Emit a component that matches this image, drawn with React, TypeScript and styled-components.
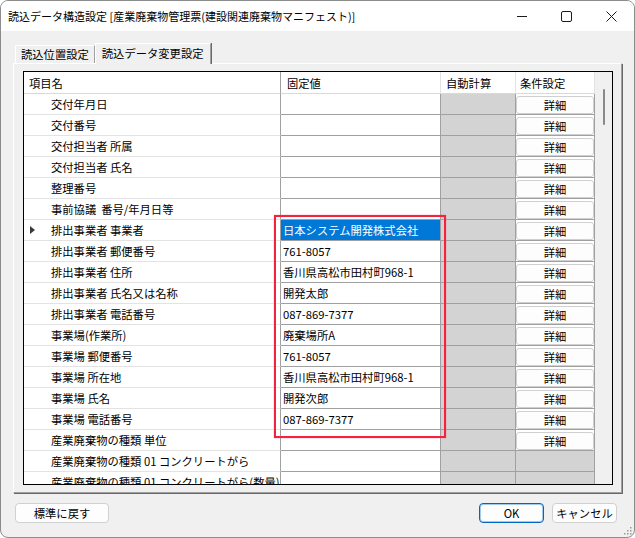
import React from "react";
import styled, { createGlobalStyle, css } from "styled-components";

const FONT = `"Noto Sans CJK JP", "Noto Sans", sans-serif`;

const GlobalStyle = createGlobalStyle`
  html, body {
    margin: 0;
    padding: 0;
    background: #ffffff;
  }
  body {
    width: 635px;
    height: 538px;
    overflow: hidden;
    font-family: ${FONT};
  }
  * {
    box-sizing: border-box;
  }
`;

type RowData = {
  name: string;
  value?: string;
  current?: boolean;
  button: boolean;
};

const rows: RowData[] = [
  { name: "交付年月日", button: true },
  { name: "交付番号", button: true },
  { name: "交付担当者 所属", button: true },
  { name: "交付担当者 氏名", button: true },
  { name: "整理番号", button: true },
  { name: "事前協議  番号/年月日等", button: true },
  { name: "排出事業者 事業者", value: "日本システム開発株式会社", current: true, button: true },
  { name: "排出事業者 郵便番号", value: "761-8057", button: true },
  { name: "排出事業者 住所", value: "香川県高松市田村町968-1", button: true },
  { name: "排出事業者 氏名又は名称", value: "開発太郎", button: true },
  { name: "排出事業者 電話番号", value: "087-869-7377", button: true },
  { name: "事業場(作業所)", value: "廃棄場所A", button: true },
  { name: "事業場 郵便番号", value: "761-8057", button: true },
  { name: "事業場 所在地", value: "香川県高松市田村町968-1", button: true },
  { name: "事業場 氏名", value: "開発次郎", button: true },
  { name: "事業場 電話番号", value: "087-869-7377", button: true },
  { name: "産業廃棄物の種類 単位", button: true },
  { name: "産業廃棄物の種類 01 コンクリートがら", button: false },
  { name: "産業廃棄物の種類 01 コンクリートがら(数量)", button: false },
];

export default function App() {
  return (
    <>
      <GlobalStyle />
      <Window>
        <TitleBar>
          <Title>読込データ構造設定 [産業廃棄物管理票(建設関連廃棄物マニフェスト)]</Title>
          <CaptionButton>
            <svg width="10" height="10" viewBox="0 0 10 10">
              <line x1="0" y1="5.5" x2="10" y2="5.5" stroke="#1a1a1a" strokeWidth="1" />
            </svg>
          </CaptionButton>
          <CaptionButton>
            <svg width="11" height="11" viewBox="0 0 11 11">
              <rect x="0.5" y="0.5" width="10" height="10" rx="1.5" fill="none" stroke="#1a1a1a" strokeWidth="1" />
            </svg>
          </CaptionButton>
          <CaptionButton>
            <svg width="11" height="11" viewBox="0 0 11 11">
              <path d="M0.5 0.5 L10.5 10.5 M10.5 0.5 L0.5 10.5" stroke="#1a1a1a" strokeWidth="1" />
            </svg>
          </CaptionButton>
        </TitleBar>

        <Body>
          <TabStrip>
            <Tab>読込位置設定</Tab>
            <Tab active>読込データ変更設定</Tab>
          </TabStrip>

          <TabPanel>
            <Grid>
              <TableArea>
                <HeaderRow>
                  <HeaderCell first>項目名</HeaderCell>
                  <HeaderCell pad={6}>固定値</HeaderCell>
                  <HeaderCell>自動計算</HeaderCell>
                  <HeaderCell pad={4} last>条件設定</HeaderCell>
                </HeaderRow>
                {rows.map((r, i) => (
                  <Row key={i}>
                    <RowHeader>
                      <Indicator>{r.current && <Arrow />}</Indicator>
                      <RowName>{r.name}</RowName>
                    </RowHeader>
                    <ValueCell current={r.current}>{r.value}</ValueCell>
                    <AutoCell />
                    <CondCell filled={!r.button}>
                      {r.button && <DetailButton>詳細</DetailButton>}
                    </CondCell>
                  </Row>
                ))}
              </TableArea>
              <ScrollTrack>
                <ScrollThumb />
              </ScrollTrack>
              <Highlight />
            </Grid>
          </TabPanel>

          <Footer>
            <DialogButton width={94}>標準に戻す</DialogButton>
            <Spacer />
            <DialogButton width={65} primary>OK</DialogButton>
            <DialogButton width={65}>キャンセル</DialogButton>
          </Footer>
        </Body>

        <Grip width="9" height="9" viewBox="0 0 9 9">
          <rect x="7" y="1" width="1.5" height="1.5" fill="#9a9a9a" />
          <rect x="4" y="4" width="1.5" height="1.5" fill="#9a9a9a" />
          <rect x="7" y="4" width="1.5" height="1.5" fill="#9a9a9a" />
          <rect x="1" y="7" width="1.5" height="1.5" fill="#9a9a9a" />
          <rect x="4" y="7" width="1.5" height="1.5" fill="#9a9a9a" />
          <rect x="7" y="7" width="1.5" height="1.5" fill="#9a9a9a" />
        </Grip>
      </Window>
    </>
  );
}

const Window = styled.div`
  position: relative;
  width: 635px;
  height: 538px;
  border: 1px solid #8c8c8c;
  border-radius: 8px;
  overflow: hidden;
  background: #f0f0f0;
  display: flex;
  flex-direction: column;
  color: #000;
`;

const TitleBar = styled.div`
  height: 30px;
  background: #ffffff;
  display: flex;
  align-items: center;
`;

const Title = styled.div`
  flex: 1;
  padding-left: 7px;
  font-size: 11px;
  white-space: nowrap;
  color: #000;
`;

const CaptionButton = styled.div`
  width: 45px;
  height: 30px;
  display: flex;
  align-items: center;
  justify-content: center;
`;

const Body = styled.div`
  flex: 1;
  display: flex;
  flex-direction: column;
  padding: 12px 12px 0 12px;
`;

const TabStrip = styled.div`
  height: 20px;
  display: flex;
  align-items: flex-end;
  padding-left: 2px;
`;

const Tab = styled.div<{ active?: boolean }>`
  height: ${(p) => (p.active ? "21px" : "18px")};
  padding: 0 ${(p) => (p.active ? "7px 0 6px" : "5px")};
  font-size: 11.3px;
  line-height: 17px;
  white-space: nowrap;
  background: #f0f0f0;
  border-top: 1px solid #ffffff;
  border-left: 1px solid #ffffff;
  border-right: 1px solid #a0a0a0;
  position: relative;
  margin-bottom: ${(p) => (p.active ? "-1px" : "0")};
  z-index: ${(p) => (p.active ? 1 : 0)};
  ${(p) =>
    p.active &&
    css`
      padding: 1px 7px 0 6px;
      box-shadow: 1px 0 0 #696969;
    `}
`;

const TabPanel = styled.div`
  height: 430px;
  padding: 7px 8px 7px 9px;
  border-top: 1px solid #ffffff;
  border-left: 1px solid #ffffff;
  border-right: 1px solid #a0a0a0;
  border-bottom: 1px solid #a0a0a0;
  box-shadow: 1px 1px 0 #696969;
`;

const Grid = styled.div`
  position: relative;
  width: 590px;
  height: 414px;
  border: 1px solid #000000;
  background: #ffffff;
  display: flex;
  overflow: hidden;
`;

const TableArea = styled.div`
  width: 571px;
  display: flex;
  flex-direction: column;
  font-size: 11.3px;
`;

const columns = "257px 160px 75px 79px";

const HeaderRow = styled.div`
  display: grid;
  grid-template-columns: ${columns};
  height: 22px;
  flex-shrink: 0;
`;

const HeaderCell = styled.div<{ first?: boolean; last?: boolean; pad?: number }>`
  background: #ffffff;
  border-bottom: 1px solid #d9d9d9;
  border-right: 1px solid ${(p) => (p.first ? "#a0a0a0" : "#e3e3e3")};
  padding-left: ${(p) => p.pad ?? 5}px;
  display: flex;
  align-items: center;
  white-space: nowrap;
`;

const Row = styled.div`
  display: grid;
  grid-template-columns: ${columns};
  height: 21px;
  flex-shrink: 0;
`;

const RowHeader = styled.div`
  display: flex;
  align-items: center;
  background: #ffffff;
  border-bottom: 1px solid #e3e3e3;
  border-right: 1px solid #a0a0a0;
  white-space: pre;
  overflow: hidden;
`;

const Indicator = styled.div`
  width: 27px;
  flex-shrink: 0;
  padding-left: 6px;
  display: flex;
  align-items: center;
`;

const Arrow = styled.span`
  width: 0;
  height: 0;
  border-left: 5px solid #3a3a3a;
  border-top: 4.5px solid transparent;
  border-bottom: 4.5px solid transparent;
`;

const RowName = styled.span`
  white-space: pre;
`;

const ValueCell = styled.div<{ current?: boolean }>`
  display: flex;
  align-items: center;
  padding-left: 2px;
  white-space: nowrap;
  overflow: hidden;
  border-bottom: 1px solid #a0a0a0;
  border-right: 1px solid #a0a0a0;
  background: ${(p) => (p.current ? "#0078d7" : "#ffffff")};
  color: ${(p) => (p.current ? "#ffffff" : "#000000")};
`;

const AutoCell = styled.div`
  background: #d3d3d3;
  border-bottom: 1px solid #a0a0a0;
  border-right: 1px solid #a0a0a0;
`;

const CondCell = styled.div<{ filled?: boolean }>`
  background: ${(p) => (p.filled ? "#d3d3d3" : "#ffffff")};
  border-bottom: 1px solid #a0a0a0;
  border-right: 1px solid #a0a0a0;
  padding: 2px 0 0 0;
`;

const DetailButton = styled.div`
  height: 18px;
  border: 1px solid #d0d0d0;
  border-radius: 3px;
  background: #fdfdfd;
  display: flex;
  align-items: center;
  justify-content: center;
  font-size: 11.3px;
`;

const ScrollTrack = styled.div`
  width: 17px;
  background: #f0f0f0;
  display: flex;
  justify-content: center;
  padding-top: 17px;
  padding-left: 0;
`;

const ScrollThumb = styled.div`
  width: 2px;
  height: 36px;
  border-radius: 1px;
  background: #8a8a8a;
`;

const Highlight = styled.div`
  position: absolute;
  left: 250px;
  top: 143px;
  width: 172px;
  height: 223px;
  border: 2px solid #f5213f;
  box-shadow: 0 0 1px rgba(245, 33, 63, 0.6);
  pointer-events: none;
`;

const Footer = styled.div`
  display: flex;
  align-items: center;
  gap: 8px;
  padding: 10px 5px 0 2px;
`;

const Spacer = styled.div`
  flex: 1;
`;

const DialogButton = styled.div<{ width: number; primary?: boolean }>`
  width: ${(p) => p.width}px;
  height: 20px;
  display: flex;
  align-items: center;
  justify-content: center;
  font-size: 11.3px;
  background: #fdfdfd;
  border: 1px solid ${(p) => (p.primary ? "#0067c0" : "#d0d0d0")};
  border-radius: 4px;
  ${(p) =>
    p.primary &&
    css`
      box-shadow: inset 0 0 0 1px rgba(0, 103, 192, 0.35);
    `}
`;

const Grip = styled.svg`
  position: absolute;
  right: 2px;
  bottom: 2px;
`;
